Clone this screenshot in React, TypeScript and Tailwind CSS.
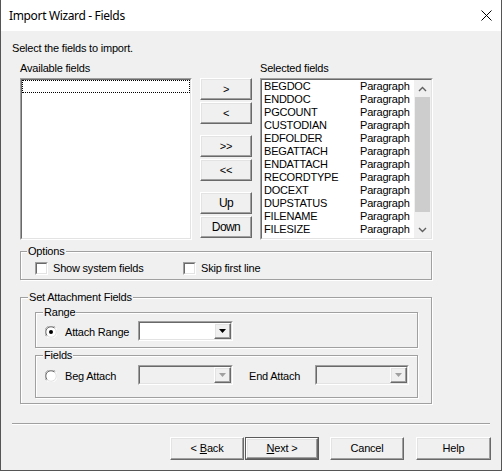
import React from "react";

const rows = [
  "BEGDOC",
  "ENDDOC",
  "PGCOUNT",
  "CUSTODIAN",
  "EDFOLDER",
  "BEGATTACH",
  "ENDATTACH",
  "RECORDTYPE",
  "DOCEXT",
  "DUPSTATUS",
  "FILENAME",
  "FILESIZE",
  "FILEPATH",
];

const raised =
  "border border-t-white border-l-white border-r-[#696969] border-b-[#696969] bg-[#f0f0f0] shadow-[inset_-1px_-1px_0_#a0a0a0,inset_1px_1px_0_#e3e3e3]";
const sunkenOuter = "border border-t-[#a0a0a0] border-l-[#a0a0a0] border-r-white border-b-white";
const sunkenInner = "border border-t-[#696969] border-l-[#696969] border-r-[#e3e3e3] border-b-[#e3e3e3]";
const etched =
  "border border-[#a0a0a0] shadow-[inset_1px_1px_0_#fff,1px_1px_0_#fff]";

function Btn({ children, className = "" }: { children: React.ReactNode; className?: string }) {
  return (
    <button
      type="button"
      className={`${raised} flex items-center justify-center text-[11px] leading-[13px] tracking-[-0.2px] text-black ${className}`}
    >
      {children}
    </button>
  );
}

function Sunken({
  className = "",
  innerClass = "",
  children,
}: {
  className?: string;
  innerClass?: string;
  children?: React.ReactNode;
}) {
  return (
    <div className={`${sunkenOuter} ${className}`}>
      <div className={`${sunkenInner} h-full w-full ${innerClass}`}>{children}</div>
    </div>
  );
}

function Checkbox({ label, className = "" }: { label: string; className?: string }) {
  return (
    <label className={`flex items-center ${className}`}>
      <Sunken className="h-[13px] w-[13px] shrink-0" innerClass="bg-white" />
      <span className="ml-[5px]">{label}</span>
    </label>
  );
}

function Radio({ checked }: { checked?: boolean }) {
  return (
    <svg width="12" height="12" viewBox="0 0 12 12" className="shrink-0">
      <circle cx="6" cy="6" r="5.5" fill="#fff" />
      <path d="M1.5 10.5 A6 6 0 0 1 10.5 1.5" stroke="#a0a0a0" strokeWidth="1" fill="none" />
      <path d="M10.5 1.5 A6 6 0 0 1 1.5 10.5" stroke="#fff" strokeWidth="1" fill="none" />
      <path d="M2.3 9.7 A5 5 0 0 1 9.7 2.3" stroke="#696969" strokeWidth="1" fill="none" />
      <path d="M9.7 2.3 A5 5 0 0 1 2.3 9.7" stroke="#e3e3e3" strokeWidth="1" fill="none" />
      {checked ? <circle cx="6" cy="6" r="2" fill="#000" /> : null}
    </svg>
  );
}

function Combo({ disabled, className = "" }: { disabled?: boolean; className?: string }) {
  return (
    <Sunken
      className={`h-[20px] shrink-0 ${className}`}
      innerClass={`flex justify-end ${disabled ? "bg-[#f0f0f0]" : "bg-white"}`}
    >
      <div className={`${raised} flex h-full w-[17px] items-center justify-center`}>
        <svg width="7" height="4" viewBox="0 0 7 4">
          <path d="M0 0 H7 L3.5 4 Z" fill={disabled ? "#a0a0a0" : "#000"} />
        </svg>
      </div>
    </Sunken>
  );
}

function Chevron({ up }: { up?: boolean }) {
  return (
    <svg width="9" height="6" viewBox="0 0 9 6">
      <path
        d={up ? "M1 5 L4.5 1.5 L8 5" : "M1 1 L4.5 4.5 L8 1"}
        stroke="#606060"
        strokeWidth="1.4"
        fill="none"
      />
    </svg>
  );
}

export default function App() {
  return (
    <div className="flex h-[471px] w-[502px] flex-col border-x border-b border-[#555] bg-[#f0f0f0] font-['Liberation_Sans',Arial,sans-serif] text-[11px] leading-[13px] tracking-[-0.2px] text-black">
      {/* title bar */}
      <div className="flex h-[31px] shrink-0 items-center justify-between bg-white pl-[8px] pr-[9px]">
        <span className="font-['Noto_Sans',sans-serif] text-[12px] tracking-[-0.35px]">
          Import Wizard - Fields
        </span>
        <svg width="11" height="11" viewBox="0 0 11 11">
          <path d="M0.5 0.5 L10.5 10.5 M10.5 0.5 L0.5 10.5" stroke="#000" strokeWidth="1" />
        </svg>
      </div>

      <div className="flex flex-col pl-[11px]">
        <div className="mt-[11px]">Select the fields to import.</div>

        <div className="ml-[8px] mt-[7px] flex">
          <div className="flex w-[172px] flex-col">
            <div>Available fields</div>
            <Sunken className="mt-[3px] h-[162px]" innerClass="bg-white">
              <div className="h-[13px] w-full border border-dotted border-black" />
            </Sunken>
          </div>

          <div className="ml-[8px] mt-[16px] flex w-[52px] flex-col">
            <Btn className="h-[22px]">&gt;</Btn>
            <Btn className="mt-[2px] h-[22px]">&lt;</Btn>
            <Btn className="mt-[11px] h-[22px]">&gt;&gt;</Btn>
            <Btn className="mt-[2px] h-[22px]">&lt;&lt;</Btn>
            <Btn className="mt-[11px] h-[22px] text-[12px] tracking-[-0.6px]">Up</Btn>
            <Btn className="mt-[2px] h-[22px] text-[12px] tracking-[-0.6px]">Down</Btn>
          </div>

          <div className="ml-[8px] flex w-[173px] flex-col">
            <div>Selected fields</div>
            <Sunken className="mt-[3px] h-[162px]" innerClass="flex overflow-hidden bg-white">
              <div className="flex-1 overflow-hidden">
                {rows.map((r) => (
                  <div key={r} className="flex h-[13px] pl-[2px]">
                    <span className="w-[96px]">{r}</span>
                    <span>Paragraph</span>
                  </div>
                ))}
              </div>
              <div className="flex w-[17px] flex-col bg-[#f0f0f0]">
                <div className="flex h-[17px] items-center justify-center">
                  <Chevron up />
                </div>
                <div className="mx-[1px] h-[115px] bg-[#cdcdcd]" />
                <div className="flex-1" />
                <div className="flex h-[17px] items-center justify-center">
                  <Chevron />
                </div>
              </div>
            </Sunken>
          </div>
        </div>

        {/* Options */}
        <fieldset className={`${etched} ml-[8px] mt-[5px] w-[412px] pb-[4px] pl-[14px] pt-[4px]`}>
          <legend className="ml-[-8px] bg-[#f0f0f0] px-[1px]">Options</legend>
          <div className="flex">
            <Checkbox label="Show system fields" className="w-[148px]" />
            <Checkbox label="Skip first line" />
          </div>
        </fieldset>

        {/* Set Attachment Fields */}
        <fieldset className={`${etched} ml-[8px] mt-[11px] w-[412px] pb-[5px] pl-[14px] pt-[2px]`}>
          <legend className="ml-[-7px] bg-[#f0f0f0] px-[1px]">Set Attachment Fields</legend>

          <fieldset className={`${etched} w-[383px] pb-[6px] pl-[9px] pt-[2px]`}>
            <legend className="ml-[-2px] bg-[#f0f0f0] px-[1px]">Range</legend>
            <div className="flex h-[20px] items-center">
              <div className="mt-[2px] flex w-[93px] items-center">
                <Radio checked />
                <span className="ml-[8px]">Attach Range</span>
              </div>
              <Combo className="w-[95px]" />
            </div>
          </fieldset>

          <fieldset className={`${etched} mt-[1px] w-[383px] pb-[12px] pl-[9px] pt-[3px]`}>
            <legend className="ml-[-2px] bg-[#f0f0f0] px-[1px]">Fields</legend>
            <div className="flex h-[20px] items-center">
              <div className="mt-[2px] flex w-[93px] items-center">
                <Radio />
                <span className="ml-[8px]">Beg Attach</span>
              </div>
              <Combo disabled className="w-[95px]" />
              <span className="ml-[16px] mt-[2px] w-[66px]">End Attach</span>
              <Combo disabled className="w-[94px]" />
            </div>
          </fieldset>
        </fieldset>

        <div className="mt-[19px] h-[2px] w-[478px] border-t border-b border-t-[#a0a0a0] border-b-white" />

        <div className="ml-[158px] mt-[12px] flex">
          <Btn className="h-[23px] w-[74px]">
            &lt; <span className="ml-[3px] underline">B</span>ack
          </Btn>
          <div className="ml-[1px] h-[23px] w-[74px] border border-[#5a5a5a]">
            <Btn className="h-full w-full">
              <span className="underline">N</span>ext &gt;
            </Btn>
          </div>
          <Btn className="ml-[11px] h-[23px] w-[74px]">Cancel</Btn>
          <Btn className="ml-[12px] h-[23px] w-[75px]">Help</Btn>
        </div>
      </div>
    </div>
  );
}
